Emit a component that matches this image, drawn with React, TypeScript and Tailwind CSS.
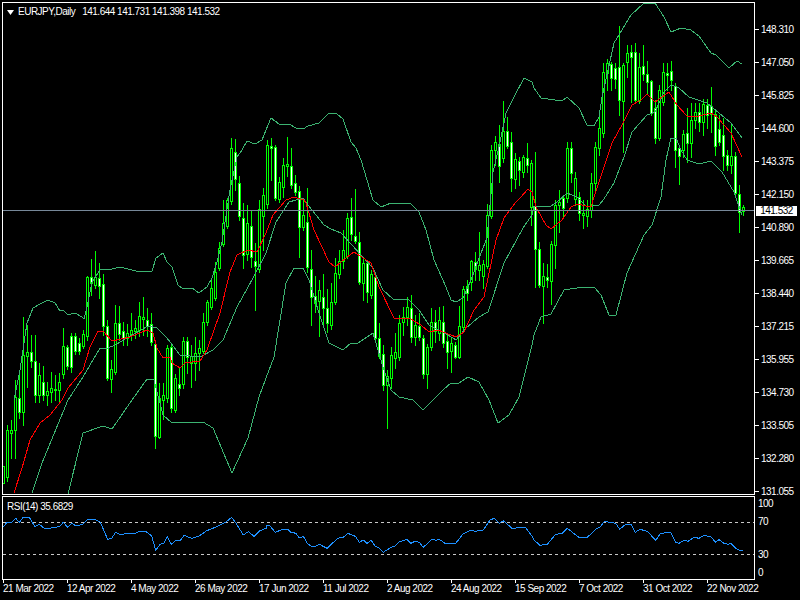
import React from "react";

// x, bodyTop, bodyBottom, wickTop, wickBottom, whiteFill
type C = [number, number, number, number, number, number];
const candles: C[] = [
  [3,466,483,466,483,0],[7,430,477,425,481,0],[11,430,433,420,458,0],[15,397,430,380,458,0],[19,398,412,372,418,1],[23,355,412,317,425,0],
  [27,352,356,325,387,0],[31,352,361,335,367,1],[35,361,395,335,402,1],[39,375,395,363,402,0],[43,382,395,366,400,1],[47,391,395,382,405,0],
  [51,388,392,372,402,0],[55,389,390,375,400,0],[59,382,390,373,402,0],[63,346,374,328,378,0],[67,347,366,345,369,1],[71,336,367,333,372,1],
  [75,336,351,333,354,1],[79,343,351,338,354,1],[83,334,346,330,348,0],[87,277,336,276,340,0],[91,277,283,259,295,1],[95,277,285,251,288,0],
  [99,278,286,263,298,1],[103,284,326,274,335,1],[107,326,378,320,380,1],[111,369,379,360,392,0],[115,323,372,305,374,0],[119,323,334,306,340,1],
  [123,331,338,322,345,1],[127,333,338,324,345,0],[131,330,334,313,340,0],[135,328,331,320,338,0],[139,316,330,302,336,0],[143,317,319,297,335,0],
  [147,320,326,308,336,1],[151,324,342,313,345,1],[155,344,436,340,448,1],[159,398,437,383,438,0],[163,395,400,383,419,0],[167,348,398,345,402,0],
  [171,347,408,345,412,1],[175,378,410,374,412,0],[179,384,388,368,395,1],[183,341,384,337,388,0],[187,341,357,337,373,1],[191,356,363,345,387,0],
  [195,353,363,337,380,0],[199,348,353,340,370,0],[203,322,351,313,353,0],[207,302,322,300,325,0],[211,288,307,278,309,0],[215,272,298,262,300,0],
  [219,248,268,242,270,0],[223,223,244,200,246,0],[227,200,226,198,228,0],[231,148,201,138,204,0],[235,152,179,139,190,1],[239,183,216,176,220,1],
  [243,218,255,203,268,1],[247,223,254,205,260,0],[251,226,257,210,267,1],[255,261,266,243,310,1],[259,209,269,200,272,0],[263,195,216,188,250,0],
  [267,145,204,140,208,0],[271,146,148,138,180,1],[275,147,198,145,200,1],[279,182,199,177,202,0],[283,165,187,158,197,0],[287,164,166,137,176,0],
  [291,166,185,148,188,1],[295,183,192,175,195,1],[299,191,227,186,257,1],[303,215,227,200,230,0],[307,222,267,188,272,1],[311,269,297,250,325,1],
  [315,296,303,276,312,1],[319,290,301,280,336,0],[323,297,308,274,325,1],[327,308,323,289,332,1],[331,302,325,283,329,0],[335,273,302,258,304,0],
  [339,261,274,250,278,0],[343,250,261,230,268,0],[347,218,256,213,258,0],[351,217,234,198,240,1],[355,236,241,189,243,1],[359,242,282,232,284,1],
  [363,263,283,258,300,0],[367,263,292,262,302,1],[371,274,295,270,298,0],[375,277,338,272,340,1],[379,338,356,323,358,1],[383,354,385,345,390,1],
  [387,376,385,370,428,0],[391,355,378,347,388,0],[395,352,358,333,368,0],[399,323,357,315,360,0],[403,317,322,307,335,0],[407,307,317,297,325,0],
  [411,308,337,295,342,1],[415,325,337,315,345,0],[419,326,337,313,340,1],[423,338,374,335,378,1],[427,347,374,344,388,0],[431,322,347,308,350,0],
  [435,322,331,310,342,1],[439,320,333,307,340,0],[443,322,343,306,347,1],[447,341,352,335,368,1],[451,343,351,338,372,0],[455,345,357,342,358,1],
  [459,326,357,306,358,0],[463,289,327,286,329,0],[467,286,293,280,300,1],[471,261,282,260,290,0],[475,262,269,252,280,1],[479,265,270,232,280,0],
  [483,264,276,260,288,0],[487,215,266,204,268,0],[491,150,216,145,218,0],[495,142,150,136,165,0],[499,144,166,125,182,1],[503,131,158,101,162,0],
  [507,131,146,117,148,1],[511,142,178,132,191,1],[515,159,179,153,188,0],[519,161,170,157,185,1],[523,157,172,155,177,0],[527,158,165,143,172,1],
  [531,163,207,160,225,0],[535,206,249,152,287,1],[539,249,285,242,287,1],[543,276,286,263,323,0],[547,277,280,264,287,1],[551,244,281,241,304,0],
  [555,205,245,200,268,0],[559,202,205,190,232,0],[563,198,208,195,218,1],[567,148,198,142,202,0],[571,148,173,142,182,1],[575,178,199,172,205,0],
  [579,197,213,192,220,1],[583,213,215,200,228,0],[587,209,216,200,226,0],[591,183,210,173,217,0],[595,147,183,142,190,0],[599,128,148,117,155,0],
  [603,72,133,63,137,0],[607,63,73,59,90,0],[611,64,78,62,90,1],[615,68,79,63,88,1],[619,67,100,26,115,1],[623,65,101,63,152,0],
  [627,53,62,45,77,0],[631,52,57,45,102,1],[635,52,100,43,103,1],[639,67,101,53,103,0],[643,66,74,45,80,1],[647,74,82,61,93,1],
  [651,81,113,80,115,1],[655,108,138,100,143,1],[659,90,138,85,140,0],[663,72,102,63,105,0],[667,73,75,63,90,1],[671,71,80,61,90,1],
  [675,86,150,83,167,1],[679,148,156,145,184,1],[683,134,150,130,157,0],[687,133,143,108,162,1],[691,120,143,103,157,0],[695,112,120,103,128,0],
  [699,112,122,103,131,1],[703,104,122,99,135,0],[707,105,115,99,128,1],[711,106,114,87,132,1],[715,114,146,110,155,1],[719,129,142,115,145,1],
  [723,135,156,118,170,1],[727,155,165,150,170,1],[731,156,165,123,173,0],[735,156,193,152,195,1],[739,194,212,185,232,1],[743,207,211,205,215,0],
];

const upper = "14,400 20,370 27,323 33,308 42,303 48,300 55,303 60,311 63,310 68,315 75,313 82,317 84,319 87,307 92,282 100,270 112,269 120,267 132,270 140,272 152,271 156,258 163,253 167,262 172,267 178,285 183,289 192,288 199,293 207,287 212,278 217,262 222,242 230,190 237,157 242,150 247,141 255,144 262,140 266,130 271,118 279,124 289,124 296,128 303,129 308,126 319,123 329,113 336,113 343,119 351,142 356,148 361,160 373,200 381,207 391,203 411,204 419,212 426,230 434,260 446,287 451,300 456,302 463,298 471,280 479,258 487,238 493,172 499,147 506,113 514,97 524,78 532,82 534,88 541,98 562,101 567,97 579,108 587,125 594,126 599,117 602,97 614,43 631,15 644,3 655,3 664,17 671,32 681,28 691,30 699,36 711,53 716,55 729,68 737,61 742,64";
const middle = "14,493 22,468 30,440 40,423 50,415 62,400 68,388 83,370 90,347 98,331 103,331 112,341 130,337 147,330 153,333 157,348 163,358 170,357 172,363 180,368 185,363 200,361 207,350 220,313 230,272 237,255 248,250 257,252 266,233 273,215 286,200 294,197 304,200 306,203 314,230 329,262 335,267 346,258 354,252 371,263 379,287 394,318 409,318 421,325 429,332 438,330 456,337 464,332 474,310 484,297 496,240 504,218 516,202 521,197 528,189 532,192 536,207 546,225 551,229 562,220 571,207 577,204 591,207 594,197 602,173 612,143 622,125 632,105 641,100 647,94 655,102 669,92 677,105 687,116 699,116 711,113 717,117 731,133 742,157";
const inner = "32,493 42,463 68,400 83,377 100,348 108,348 115,345 127,338 148,326 157,328 167,338 180,355 200,357 213,350 223,340 237,307 253,278 266,253 276,222 289,202 303,198 308,205 324,225 331,229 341,233 373,268 383,290 393,299 409,300 419,310 429,325 443,332 456,340 466,328 479,317 488,312 504,263 523,228 532,215 534,206 551,206 557,202 567,193 577,197 587,207 599,205 604,199 614,183 624,157 632,132 647,115 655,112 664,92 671,85 679,88 689,97 707,103 731,123 742,138";
const lower = "68,494 83,433 103,426 112,429 132,400 147,379 154,380 163,415 172,423 190,422 203,422 213,428 232,473 248,438 259,397 266,378 274,357 286,283 294,268 303,268 309,280 319,313 329,343 343,350 351,343 358,343 373,333 383,367 391,390 399,397 413,400 423,410 433,400 443,390 451,383 459,383 468,377 479,382 489,400 498,423 509,415 519,397 532,345 534,335 541,317 551,314 564,290 577,288 594,287 601,295 609,315 616,315 627,273 644,235 652,225 661,197 666,160 671,138 676,138 681,150 687,160 699,164 711,161 722,172 734,192 742,215";

const rsiA = [[10,382],[20,368],[35,367],[47,355],[58,367],[70,352],[88,352],[105,380],[118,373],[133,385],[148,385],[178,380],[190,367],[203,382],[215,370],[228,378],[250,372],[263,358],[288,360],[300,365],[323,418],[335,415],[347,397],[360,403],[405,400],[420,394],[437,394],[455,408],[467,451],[480,433],[492,430],[502,409],[514,433],[527,421],[540,423],[552,406],[575,415],[598,408],[620,392],[650,380],[675,368],[695,352],[708,370],[730,405],[745,395],[762,409],[780,392],[798,385]];
const rsiB = [[0,378],[10,376],[28,397],[50,388],[65,388],[75,397],[90,400],[100,414],[112,409],[125,432],[137,439],[150,438],[160,433],[183,445],[215,415],[232,412],[245,400],[268,409],[280,427],[292,420],[303,430],[316,421],[328,439],[340,445],[352,457],[375,442],[388,438],[400,426],[423,418],[435,430],[447,424],[460,427],[472,442],[497,418],[510,421],[520,418],[537,430],[570,429],[590,403],[612,391],[628,394],[652,390],[672,360],[685,355],[700,370],[712,362],[738,385],[778,382],[798,408]];
const rsiC = [[0,420],[18,436],[40,433],[65,403],[85,400],[100,385],[125,405],[135,412],[160,412],[185,388],[197,382],[212,364],[225,367],[245,370],[257,388],[275,373],[292,373],[304,397],[318,388],[340,394],[365,421],[380,400],[410,397],[425,427],[435,430],[450,421],[462,424],[480,412],[495,415],[510,406],[530,410],[545,427],[555,419],[570,430],[582,433],[590,430],[605,445],[617,451],[627,452]];
const rsi = [
  ...rsiA.map(([x, y]) => [x / 3, y / 3]),
  ...rsiB.map(([x, y]) => [266 + x / 3, y / 3]),
  ...rsiC.map(([x, y]) => [534 + x / 3, y / 3]),
]
  .map(([x, y]) => `${x.toFixed(1)},${(400 + y).toFixed(1)}`)
  .join(" ");

const prices = ["148.310","147.050","145.825","144.600","143.375","142.150","140.890","139.665","138.440","137.215","135.955","134.730","133.505","132.280","131.055"];
const dates = ["21 Mar 2022","12 Apr 2022","4 May 2022","26 May 2022","17 Jun 2022","11 Jul 2022","2 Aug 2022","24 Aug 2022","15 Sep 2022","7 Oct 2022","31 Oct 2022","22 Nov 2022"];

function Candle({ c }: { c: C }) {
  const [x, t, b, wt, wb, f] = c;
  return (
    <g shapeRendering="crispEdges">
      <rect x={x} y={wt} width={1} height={wb - wt + 1} fill="#00ff00" />
      <rect x={x - 1} y={t} width={3} height={b - t + 1} fill="#00ff00" />
      {b - t > 1 && <rect x={x} y={t + 1} width={1} height={b - t - 1} fill={f ? "#ffffff" : "#000000"} />}
    </g>
  );
}

function Band({ points, color }: { points: string; color: string }) {
  return <polyline points={points} fill="none" stroke={color} strokeWidth={1} shapeRendering="crispEdges" />;
}

export default function App() {
  return (
    <div className="flex h-[600px] w-[800px] flex-col overflow-hidden bg-black pl-[2px] pt-[2px] font-['Liberation_Sans',sans-serif] text-[10px] leading-none tracking-[-0.5px] text-white">
      <div className="flex h-[493px] shrink-0">
        <div className="relative h-full w-[753px] shrink-0 overflow-hidden border border-white">
          <svg width={751} height={491} viewBox="3 3 751 491" className="block">
            {candles.map((c) => (
              <Candle key={c[0]} c={c} />
            ))}
            <Band points={upper} color="#3cb371" />
            <Band points={inner} color="#3cb371" />
            <Band points={lower} color="#3cb371" />
            <Band points={middle} color="#ff0000" />
            <rect x={3} y={210} width={751} height={1} fill="#778899" shapeRendering="crispEdges" />
          </svg>
          <div className="absolute left-[4px] top-[4px] flex items-center">
            <svg width={7} height={5} viewBox="0 0 7 5" className="mr-[4px] block">
              <polygon points="0,0 7,0 3.5,5" fill="#ffffff" />
            </svg>
            <span>EURJPY,Daily</span>
            <span className="ml-[7px]">141.644 141.731 141.398 141.532</span>
          </div>
        </div>
        <div className="relative flex flex-1 flex-col pt-[11px]">
          {prices.map((p) => (
            <div key={p} className="flex h-[33px] shrink-0 items-center">
              <div className="h-[1px] w-[4px] bg-white" />
              <span className="ml-[2px]">{p}</span>
            </div>
          ))}
          <div className="absolute left-[1px] top-[204px] flex h-[10px] w-[41px] items-center justify-center bg-white text-black">
            141.532
          </div>
        </div>
      </div>

      <div className="mt-[1px] flex h-[84px] shrink-0">
        <div className="relative h-full w-[753px] shrink-0 overflow-hidden border border-white">
          <svg width={751} height={82} viewBox="3 497 751 82" className="block">
            <line x1={3} x2={754} y1={522.5} y2={522.5} stroke="#c8c8c8" strokeDasharray="3 3" shapeRendering="crispEdges" />
            <line x1={3} x2={754} y1={554.5} y2={554.5} stroke="#c8c8c8" strokeDasharray="3 3" shapeRendering="crispEdges" />
            <polyline points={rsi} fill="none" stroke="#1e90ff" strokeWidth={1} shapeRendering="crispEdges" />
          </svg>
          <span className="absolute left-[4px] top-[5px]">RSI(14) 35.6829</span>
        </div>
        <div className="flex flex-1 flex-col pl-[3px] pt-[3px]">
          <span className="h-[10px] shrink-0">100</span>
          <span className="mt-[8px] h-[10px] shrink-0">70</span>
          <span className="mt-[23px] h-[10px] shrink-0">30</span>
          <span className="mt-[8px] h-[10px] shrink-0">0</span>
        </div>
      </div>

      <div className="flex">
        {dates.map((d) => (
          <div key={d} className="h-[20px] w-[64px] shrink-0 whitespace-nowrap pl-[1px]">
            <div className="h-[3px] w-[1px] bg-white" />
            <span className="mt-[1px] block">{d}</span>
          </div>
        ))}
      </div>
    </div>
  );
}
